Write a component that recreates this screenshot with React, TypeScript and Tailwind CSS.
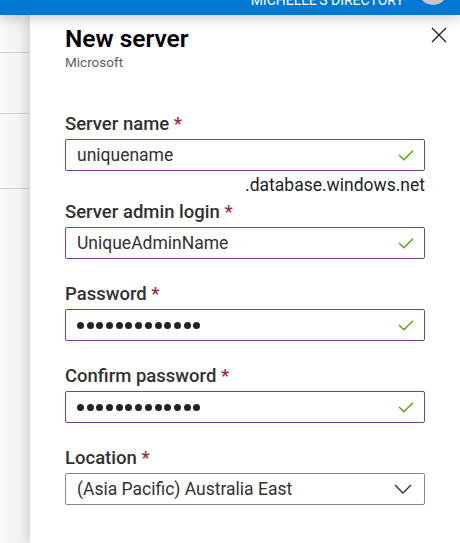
import React from "react";

const font = { fontFamily: 'Roboto, "Noto Sans", Arial, sans-serif' };

function Check() {
  return (
    <svg width="16" height="11" viewBox="0 0 16 11" className="shrink-0">
      <polyline points="1,5 5.8,9.8 15,0.8" fill="none" stroke="#57a300" strokeWidth="1.4" />
    </svg>
  );
}

function Chevron() {
  return (
    <svg width="18" height="10" viewBox="0 0 18 10" className="shrink-0">
      <polyline points="1,1 9,9 17,1" fill="none" stroke="#323130" strokeWidth="1.4" />
    </svg>
  );
}

function Label({ text }: { text: string }) {
  return (
    <div className="text-[18.5px] leading-[24px] font-medium text-[#323130] whitespace-nowrap">
      {text} <span className="text-[#a4262c]">*</span>
    </div>
  );
}

function Dots() {
  return (
    <div className="flex gap-[2.7px]">
      {Array.from({ length: 13 }).map((_, i) => (
        <div key={i} className="w-[7px] h-[7px] rounded-full bg-[#252423]" />
      ))}
    </div>
  );
}

function Input({ children }: { children: React.ReactNode }) {
  return (
    <div className="mt-[3px] h-[32px] border border-[#7b3f8f] rounded-[2px] flex items-center justify-between pl-[11px] pr-[10px] text-[17.5px] text-[#323130]">
      <div className="flex items-center">{children}</div>
      <Check />
    </div>
  );
}

export default function App() {
  return (
    <div className="w-[460px] h-[543px] overflow-hidden bg-white flex flex-col" style={font}>
      <div className="relative z-20 h-[15px] bg-[#0078d4] flex justify-end items-end pr-[12px] gap-[14px] shadow-[0_3px_14px_rgba(0,0,0,0.22)]">
        <div className="text-white text-[14px] leading-[14px] mb-[8px] whitespace-nowrap">MICHELLE'S DIRECTORY</div>
        <div className="w-[30px] h-[30px] rounded-full bg-[#c8c6c4] mb-[10px] shrink-0" />
      </div>
      <div className="flex flex-1">
        <div className="w-[30px] bg-gradient-to-r from-[#fafafa] to-[#eeeeee] flex flex-col">
          <div className="h-[37px]" />
          <div className="h-px bg-[#d2d2d2]" />
          <div className="h-[60px]" />
          <div className="h-px bg-[#d2d2d2]" />
          <div className="h-[74px]" />
          <div className="h-px bg-[#d2d2d2]" />
        </div>
        <div className="relative z-10 flex-1 bg-white shadow-[-4px_0_10px_rgba(0,0,0,0.10)] pl-[35px] pr-[35px] pt-[9px]">
          <div className="flex justify-between items-start mr-[-22px]">
            <div>
              <div className="text-[24.5px] leading-[30px] font-semibold text-[#000]">New server</div>
              <div className="text-[13.5px] leading-[16px] text-[#605e5c]">Microsoft</div>
            </div>
            <svg width="16" height="16" viewBox="0 0 16 16" className="mt-[3px]">
              <path d="M1 1 L15 15 M15 1 L1 15" stroke="#201f1e" strokeWidth="1.3" fill="none" />
            </svg>
          </div>

          <div className="mt-[42px]">
            <Label text="Server name" />
            <Input>uniquename</Input>
            <div className="text-right text-[17.5px] leading-[22px] text-[#201f1e] mt-[3px]">.database.windows.net</div>
          </div>

          <div className="mt-[4px]">
            <Label text="Server admin login" />
            <Input>UniqueAdminName</Input>
          </div>

          <div className="mt-[23px]">
            <Label text="Password" />
            <Input>
              <Dots />
            </Input>
          </div>

          <div className="mt-[23px]">
            <Label text="Confirm password" />
            <Input>
              <Dots />
            </Input>
          </div>

          <div className="mt-[23px]">
            <Label text="Location" />
            <div className="mt-[3px] h-[32px] border border-[#8a8886] rounded-[2px] flex items-center justify-between pl-[11px] pr-[12px] text-[17.5px] text-[#323130]">
              <span>(Asia Pacific) Australia East</span>
              <Chevron />
            </div>
          </div>
        </div>
      </div>
    </div>
  );
}
